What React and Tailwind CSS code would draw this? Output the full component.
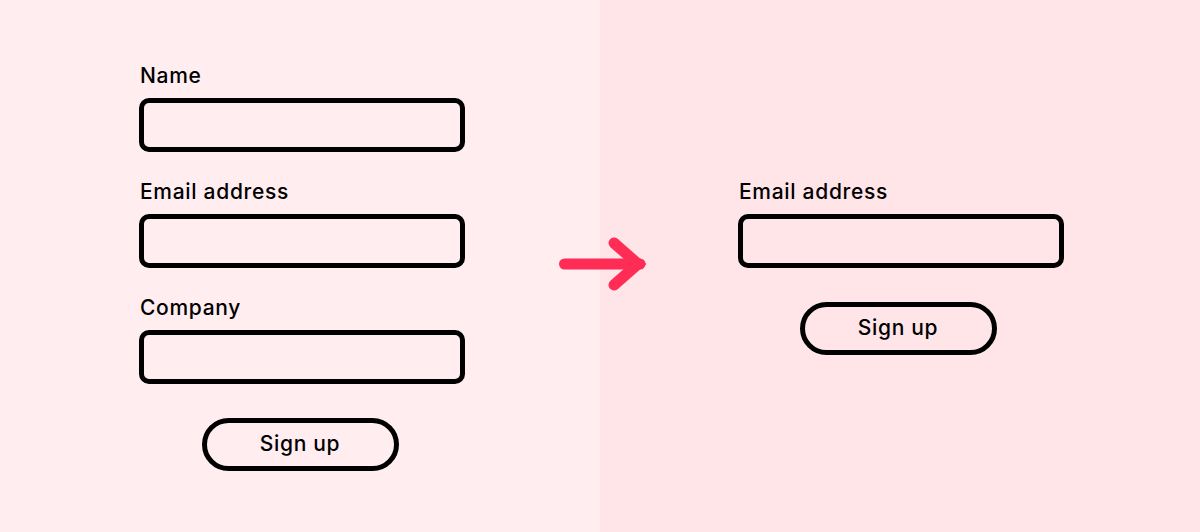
import React from "react";

function Field({ label }) {
  return (
    <div className="flex flex-col">
      <label className="text-[21px] leading-[28px] font-medium tracking-[0.7px] text-black mb-[8px] pl-[1px]">{label}</label>
      <div className="h-[54px] w-[326px] rounded-[10px] border-[5px] border-black" />
    </div>
  );
}

function Button() {
  return (
    <div className="h-[53px] w-[197px] rounded-full border-[5px] border-black flex items-center justify-center text-[21px] font-medium tracking-[0.7px] text-black">
      Sign up
    </div>
  );
}

export default function App() {
  return (
    <div
      className="relative w-[1200px] h-[532px] flex"
      style={{ fontFamily: "Inter, 'Noto Sans', sans-serif" }}
    >
      <div className="w-[600px] h-full bg-[#ffedf0] flex items-center justify-center">
        <div className="flex flex-col items-center">
          <div className="flex flex-col gap-[26px] ml-[4px]">
            <Field label="Name" />
            <Field label="Email address" />
            <Field label="Company" />
          </div>
          <div className="mt-[34px]">
            <Button />
          </div>
        </div>
      </div>
      <div className="w-[600px] h-full bg-[#ffe4e8] flex items-center justify-center">
        <div className="flex flex-col items-center">
          <div className="ml-[2px]">
            <Field label="Email address" />
          </div>
          <div className="mt-[34px] mr-[4px]">
            <Button />
          </div>
        </div>
      </div>
      <svg
        className="absolute left-[550px] top-[230px]"
        width="110"
        height="70"
        viewBox="550 230 110 70"
      >
        <path d="M564.5 264 H640" stroke="#ff2d55" strokeWidth="11" strokeLinecap="round" fill="none" />
        <path d="M614 243 L638 264 L614 285" stroke="#ff2d55" strokeWidth="11" strokeLinecap="round" strokeLinejoin="miter" fill="none" />
      </svg>
    </div>
  );
}
